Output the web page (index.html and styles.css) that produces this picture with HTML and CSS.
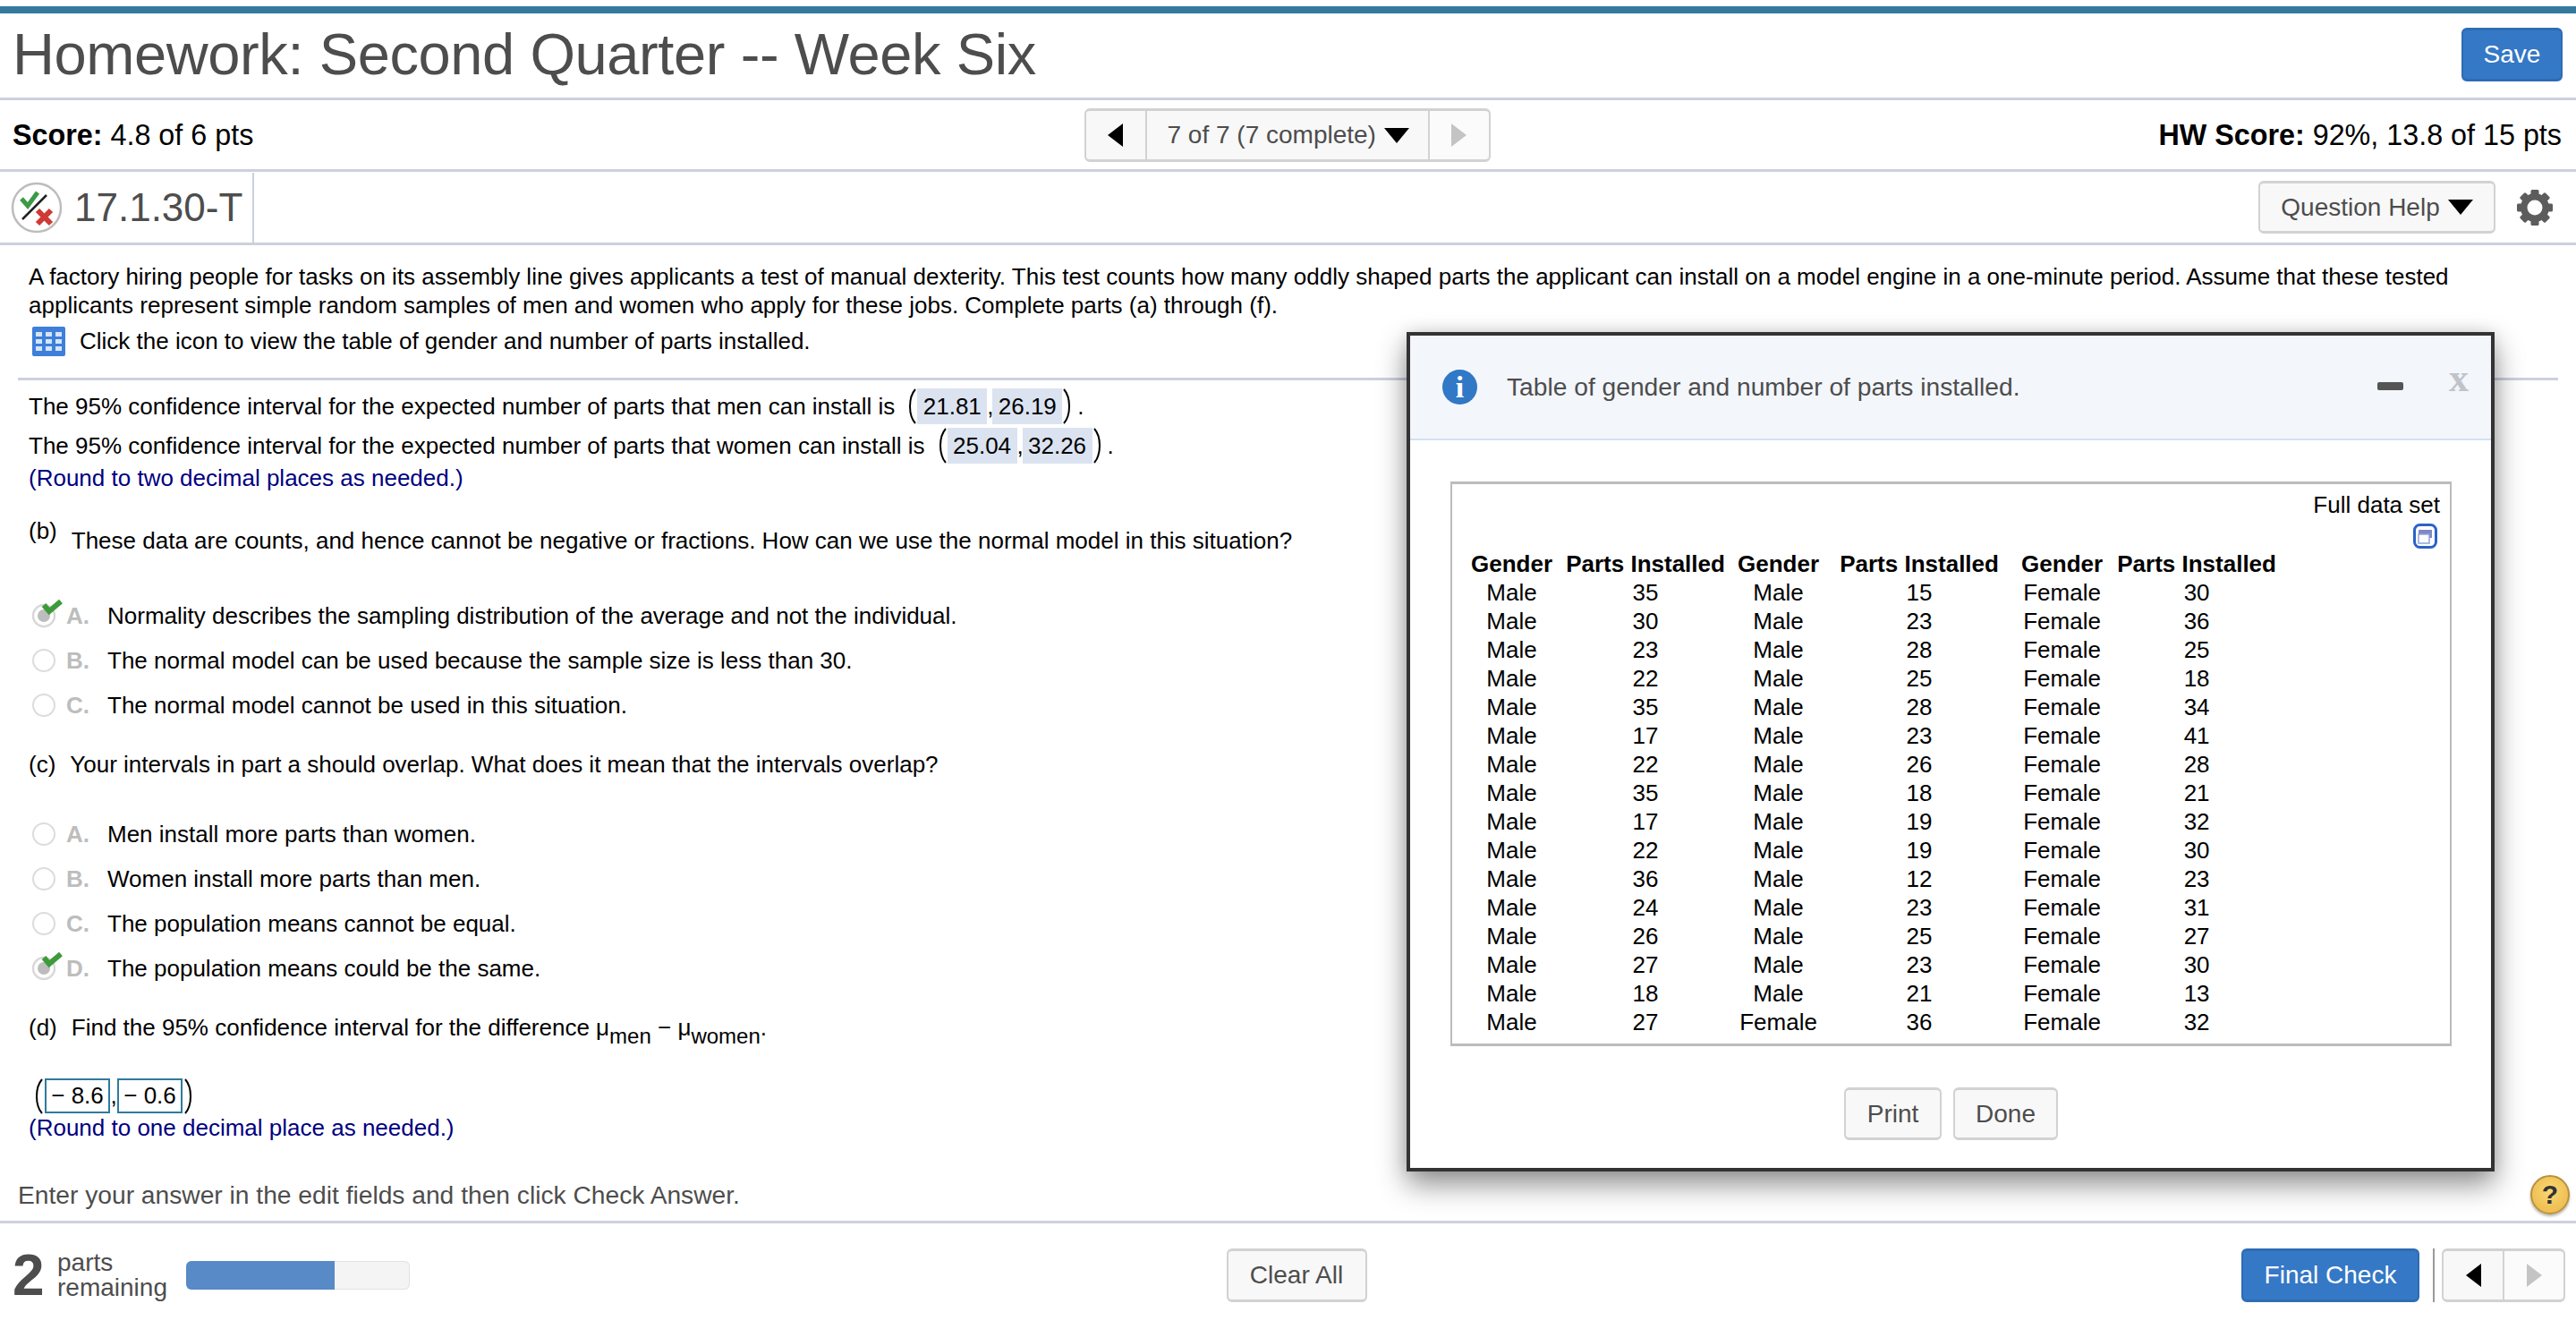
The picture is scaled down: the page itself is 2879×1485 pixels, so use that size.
FILE: index.html
```html
<!DOCTYPE html>
<html lang="en">

<head>
    <meta charset="UTF-8">
    <title>Homework: Second Quarter -- Week Six</title>
    <link rel="stylesheet" href="styles.css">
</head>

<body>
    <svg class="defs" width="0" height="0">
        <symbol id="radio-checked" viewBox="0 0 40 36">
            <circle cx="16" cy="21" r="12" fill="none" stroke="#d8d8d8" stroke-width="2.5"/>
            <circle cx="16" cy="21" r="7" fill="#bdbdbd"/>
            <path d="M16 9l6 7L35 5" fill="none" stroke="#3f9a3c" stroke-width="6"/>
        </symbol>
        <symbol id="paren-left" viewBox="0 0 10 40">
            <path d="M9 1C1 10 1 30 9 39" fill="none" stroke="#000" stroke-width="2"/>
        </symbol>
        <symbol id="paren-right" viewBox="0 0 10 40">
            <path d="M1 1C9 10 9 30 1 39" fill="none" stroke="#000" stroke-width="2"/>
        </symbol>
    </svg>

    <header class="title-row">
        <h1>Homework: Second Quarter -- Week Six</h1>
        <button class="btn btn-primary btn-save">Save</button>
    </header>

    <div class="score-row">
        <div><b>Score:</b> 4.8 of 6 pts</div>
        <div class="nav-group">
            <span class="nav-arrow"><i class="tri-left"></i></span>
            <span class="nav-mid">7 of 7 (7 complete)<i class="tri-down"></i></span>
            <span class="nav-arrow nav-off"><i class="tri-right"></i></span>
        </div>
        <div class="hw-score"><b>HW Score:</b> 92%, 13.8 of 15 pts</div>
    </div>

    <div class="question-row">
        <div class="question-id">
            <svg class="verdict" viewBox="0 0 58 58">
                <circle cx="29" cy="29" r="27" fill="#fff" stroke="#bdbdbd" stroke-width="2.5"/>
                <path d="M12 19l7 8L30 12" fill="none" stroke="#3c9a46" stroke-width="5"/>
                <path d="M13 42L40 15" stroke="#222" stroke-width="2.5"/>
                <path d="M30 32l15 15M45 32L30 47" stroke="#cf3a34" stroke-width="6"/>
            </svg>
            <span>17.1.30-T</span>
        </div>
        <div class="question-tools">
            <button class="btn btn-help">Question Help<i class="tri-down"></i></button>
            <svg class="gear" viewBox="0 0 40 40">
                <g fill="#5c5c5c">
                    <rect x="15.5" y="0" width="9" height="40" rx="1.5"/>
                    <rect x="15.5" y="0" width="9" height="40" rx="1.5" transform="rotate(45 20 20)"/>
                    <rect x="15.5" y="0" width="9" height="40" rx="1.5" transform="rotate(90 20 20)"/>
                    <rect x="15.5" y="0" width="9" height="40" rx="1.5" transform="rotate(135 20 20)"/>
                    <circle cx="20" cy="20" r="16"/>
                </g>
                <circle cx="20" cy="20" r="8.5" fill="#fff"/>
            </svg>
        </div>
    </div>

    <main class="content">
        <p class="intro">A factory hiring people for tasks on its assembly line gives applicants a test of manual dexterity. This test counts how many oddly shaped parts the applicant can install on a model engine in a one-minute period. Assume that these tested applicants represent simple random samples of men and women who apply for these jobs. Complete parts (a) through (f).</p>
        <div class="table-link">
            <svg class="grid-icon" viewBox="0 0 37 33">
                <rect width="37" height="33" rx="2" fill="#3d7fd9"/>
                <g fill="#d5e4f8">
                    <rect x="4" y="6" width="7" height="5"/><rect x="15" y="6" width="7" height="5"/><rect x="26" y="6" width="7" height="5"/>
                    <rect x="4" y="14" width="7" height="5"/><rect x="15" y="14" width="7" height="5"/><rect x="26" y="14" width="7" height="5"/>
                    <rect x="4" y="22" width="7" height="5"/><rect x="15" y="22" width="7" height="5"/><rect x="26" y="22" width="7" height="5"/>
                </g>
            </svg>
            <span>Click the icon to view the table of gender and number of parts installed.</span>
        </div>
        <hr class="rule">

        <div class="interval"><span>The 95% confidence interval for the expected number of parts that men can install is</span>
            <svg class="paren"><use href="#paren-left"/></svg><span class="filled">21.81</span><span class="comma">,</span><span class="filled">26.19</span><svg class="paren paren-r"><use href="#paren-right"/></svg><span>.</span></div>
        <div class="interval"><span>The 95% confidence interval for the expected number of parts that women can install is</span>
            <svg class="paren"><use href="#paren-left"/></svg><span class="filled">25.04</span><span class="comma">,</span><span class="filled">32.26</span><svg class="paren paren-r"><use href="#paren-right"/></svg><span>.</span></div>
        <div class="note">(Round to two decimal places as needed.)</div>

        <div class="part part-b"><span class="part-label">(b)</span><span>These data are counts, and hence cannot be negative or fractions. How can we use the normal model in this situation?</span></div>
        <div class="options options-b">
            <div class="option"><svg class="radio-check"><use href="#radio-checked"/></svg><b>A.</b><span>Normality describes the sampling distribution of the average and not the individual.</span></div>
            <div class="option"><i class="radio"></i><b>B.</b><span>The normal model can be used because the sample size is less than 30.</span></div>
            <div class="option"><i class="radio"></i><b>C.</b><span>The normal model cannot be used in this situation.</span></div>
        </div>

        <div class="part part-c"><span class="part-label">(c)</span><span>Your intervals in part a should overlap. What does it mean that the intervals overlap?</span></div>
        <div class="options options-c">
            <div class="option"><i class="radio"></i><b>A.</b><span>Men install more parts than women.</span></div>
            <div class="option"><i class="radio"></i><b>B.</b><span>Women install more parts than men.</span></div>
            <div class="option"><i class="radio"></i><b>C.</b><span>The population means cannot be equal.</span></div>
            <div class="option"><svg class="radio-check"><use href="#radio-checked"/></svg><b>D.</b><span>The population means could be the same.</span></div>
        </div>

        <div class="part part-d"><span class="part-label">(d)</span><span>Find the 95% confidence interval for the difference <span class="math">μ<sub>men</sub> − μ<sub>women</sub>.</span></span></div>
        <div class="answer">
            <svg class="paren"><use href="#paren-left"/></svg><span class="answer-box">− 8.6</span><span class="comma">,</span><span class="answer-box">− 0.6</span><svg class="paren paren-r"><use href="#paren-right"/></svg>
        </div>
        <div class="note note-d">(Round to one decimal place as needed.)</div>
        <div class="enter">Enter your answer in the edit fields and then click Check Answer.</div>
    </main>

    <footer class="footer">
        <div class="parts-left">
            <span class="parts-num">2</span>
            <span class="parts-text">parts<br>remaining</span>
            <div class="progress"><div class="progress-fill"></div></div>
        </div>
        <button class="btn btn-clear">Clear All</button>
        <div class="footer-right">
            <button class="btn btn-primary btn-final">Final Check</button>
            <span class="footer-sep"></span>
            <div class="nav-group nav-small">
                <span class="nav-arrow"><i class="tri-left"></i></span>
                <span class="nav-arrow nav-off"><i class="tri-right"></i></span>
            </div>
        </div>
    </footer>

    <div class="help-bubble">?</div>

    <section class="modal">
        <div class="modal-head">
            <span class="info-icon">i</span>
            <span class="modal-title">Table of gender and number of parts installed.</span>
            <i class="modal-min"></i>
            <span class="modal-close">x</span>
        </div>
        <div class="modal-body">
            <div class="data-box">
                <div class="full-data">Full data set</div>
                <div class="full-icon-row">
                    <svg class="full-icon" viewBox="0 0 27 28">
                        <rect x="1.5" y="1.5" width="24" height="25" rx="6" fill="#fff" stroke="#2a62c9" stroke-width="3"/>
                        <rect x="6" y="7" width="15" height="9" fill="#7f88c4"/>
                        <rect x="6" y="12" width="12" height="10" fill="#fff" stroke="#8fa4d8" stroke-width="1.5"/>
                    </svg>
                </div>
                <table class="data-table">
                    <thead>
                        <tr><th>Gender</th><th>Parts Installed</th><th>Gender</th><th>Parts Installed</th><th>Gender</th><th>Parts Installed</th></tr>
                    </thead>
                    <tbody>
                        <tr><td>Male</td><td>35</td><td>Male</td><td>15</td><td>Female</td><td>30</td></tr>
                        <tr><td>Male</td><td>30</td><td>Male</td><td>23</td><td>Female</td><td>36</td></tr>
                        <tr><td>Male</td><td>23</td><td>Male</td><td>28</td><td>Female</td><td>25</td></tr>
                        <tr><td>Male</td><td>22</td><td>Male</td><td>25</td><td>Female</td><td>18</td></tr>
                        <tr><td>Male</td><td>35</td><td>Male</td><td>28</td><td>Female</td><td>34</td></tr>
                        <tr><td>Male</td><td>17</td><td>Male</td><td>23</td><td>Female</td><td>41</td></tr>
                        <tr><td>Male</td><td>22</td><td>Male</td><td>26</td><td>Female</td><td>28</td></tr>
                        <tr><td>Male</td><td>35</td><td>Male</td><td>18</td><td>Female</td><td>21</td></tr>
                        <tr><td>Male</td><td>17</td><td>Male</td><td>19</td><td>Female</td><td>32</td></tr>
                        <tr><td>Male</td><td>22</td><td>Male</td><td>19</td><td>Female</td><td>30</td></tr>
                        <tr><td>Male</td><td>36</td><td>Male</td><td>12</td><td>Female</td><td>23</td></tr>
                        <tr><td>Male</td><td>24</td><td>Male</td><td>23</td><td>Female</td><td>31</td></tr>
                        <tr><td>Male</td><td>26</td><td>Male</td><td>25</td><td>Female</td><td>27</td></tr>
                        <tr><td>Male</td><td>27</td><td>Male</td><td>23</td><td>Female</td><td>30</td></tr>
                        <tr><td>Male</td><td>18</td><td>Male</td><td>21</td><td>Female</td><td>13</td></tr>
                        <tr><td>Male</td><td>27</td><td>Female</td><td>36</td><td>Female</td><td>32</td></tr>
                    </tbody>
                </table>
            </div>
            <div class="modal-actions">
                <button class="btn btn-print">Print</button>
                <button class="btn btn-done">Done</button>
            </div>
        </div>
    </section>
</body>

</html>
```

FILE: styles.css
```css
html,
body {
    margin: 0;
    padding: 0;
}

body {
    position: relative;
    display: flex;
    flex-direction: column;
    height: 1485px;
    overflow: hidden;
    background: #fff;
    color: #000;
    font-family: "Liberation Sans", Arial, sans-serif;
    font-size: 26px;
    border-top: 7px solid #fff;
    box-sizing: border-box;
}

.defs {
    position: absolute;
}

.btn {
    box-sizing: border-box;
    background: #f8f8f8;
    border: 2px solid #d2d2d2;
    border-top-width: 3px;
    border-bottom-width: 3px;
    border-radius: 6px;
    color: #4d4d4d;
    font-family: inherit;
    font-size: 28px;
    padding: 0;
}

.btn-primary {
    background: #3578c6;
    border-color: #2f6cb4;
    color: #fff;
}

.title-row {
    display: flex;
    justify-content: space-between;
    align-items: center;
    box-sizing: border-box;
    height: 105px;
    padding: 0 15px 3px 14px;
    border-top: 8px solid #347a9e;
    border-bottom: 3px solid #ccd0df;
}

h1 {
    margin: 0;
    color: #4d4d4d;
    font-size: 65px;
    font-weight: normal;
    letter-spacing: -0.4px;
}

.btn-save {
    width: 113px;
    height: 60px;
}

.score-row {
    display: grid;
    grid-template-columns: 1fr auto 1fr;
    align-items: center;
    box-sizing: border-box;
    height: 80px;
    padding: 1px 16px 0 14px;
    border-bottom: 3px solid #ccd0df;
    font-size: 32.3px;
}

.hw-score {
    text-align: right;
}

.nav-group {
    display: flex;
    box-sizing: border-box;
    height: 60px;
    background: #f8f8f8;
    border: 2px solid #d2d2d2;
    border-top-width: 3px;
    border-bottom-width: 3px;
    border-radius: 6px;
    color: #4d4d4d;
    font-size: 28px;
}

.nav-arrow {
    display: flex;
    justify-content: center;
    align-items: center;
    width: 66px;
}

.nav-mid {
    display: flex;
    align-items: center;
    box-sizing: border-box;
    width: 318px;
    padding-left: 23px;
    border-left: 2px solid #d2d2d2;
    border-right: 2px solid #d2d2d2;
}

.nav-off {
    background: #fbfbfb;
    border-radius: 0 6px 6px 0;
}

.tri-left {
    border-top: 13px solid transparent;
    border-bottom: 13px solid transparent;
    border-right: 17px solid #000;
}

.tri-right {
    border-top: 13px solid transparent;
    border-bottom: 13px solid transparent;
    border-left: 17px solid #c4c4c4;
}

.tri-down {
    display: inline-block;
    margin-left: 9px;
    border-left: 14px solid transparent;
    border-right: 14px solid transparent;
    border-top: 17px solid #000;
}

.question-row {
    display: flex;
    justify-content: space-between;
    align-items: center;
    box-sizing: border-box;
    height: 82px;
    border-bottom: 3px solid #ccd0df;
}

.question-id {
    display: flex;
    align-items: center;
    box-sizing: border-box;
    width: 284px;
    height: 78px;
    padding-left: 12px;
    border-right: 2px solid #ccd0df;
    color: #4d4d4d;
    font-size: 44px;
}

.verdict {
    width: 58px;
    height: 58px;
    margin-right: 13px;
}

.question-tools {
    display: flex;
    align-items: center;
    gap: 24px;
    padding-right: 26px;
}

.btn-help {
    display: flex;
    align-items: center;
    justify-content: center;
    width: 265px;
    height: 59px;
}

.gear {
    width: 40px;
    height: 40px;
}

.content {
    flex: 1;
    min-height: 0;
}

.intro {
    margin: 19px 70px 0 32px;
    line-height: 32px;
}

.table-link {
    display: flex;
    align-items: center;
    height: 40px;
    margin: 4px 0 0 36px;
}

.grid-icon {
    width: 37px;
    height: 33px;
    margin-right: 16px;
}

.rule {
    height: 3px;
    margin: 21px 20px 7px;
    border: 0;
    background: #ccd0df;
}

.interval {
    display: flex;
    align-items: center;
    height: 44px;
    padding-left: 32px;
    white-space: nowrap;
}

.paren {
    flex: none;
    width: 10px;
    height: 40px;
    margin: 0 1px 0 14px;
}

.paren-r {
    margin: 0 6px 0 1px;
}

.filled {
    box-sizing: border-box;
    width: 78px;
    height: 40px;
    background: #dbe3f0;
    line-height: 40px;
    text-align: center;
}

.comma {
    width: 6px;
    text-align: center;
}

.note {
    padding-left: 32px;
    color: #00007f;
    line-height: 28px;
}

.part {
    display: flex;
    align-items: center;
    height: 32px;
    padding-left: 32px;
}

.part-label {
    margin-right: 16px;
}

.part-b {
    margin-top: 40px;
}

.part-b .part-label {
    position: relative;
    top: -11px;
}

.part-c,
.part-d {
    margin-top: 25px;
}

.math sub {
    position: relative;
    top: 3px;
    font-size: 24px;
    line-height: 0;
}

.options-b {
    margin-top: 43px;
}

.options-c {
    margin-top: 37px;
}

.option {
    display: flex;
    align-items: center;
    height: 50px;
    padding-left: 36px;
}

.option b {
    width: 46px;
    color: #bdbdbd;
}

.radio {
    box-sizing: border-box;
    width: 26px;
    height: 26px;
    margin-right: 12px;
    border: 2.5px solid #dcdcdc;
    border-radius: 50%;
}

.radio-check {
    width: 40px;
    height: 36px;
    margin: -6px 1px 0 -3px;
}

.answer {
    display: flex;
    align-items: center;
    height: 39px;
    margin-top: 41px;
    padding-left: 38px;
}

.answer .paren {
    margin: 0 2px 0 0;
}

.answer .paren-r {
    margin: 0 0 0 2px;
}

.answer .comma {
    width: 8px;
}

.answer-box {
    box-sizing: border-box;
    width: 73px;
    height: 39px;
    border: 2px solid #2f7a9e;
    line-height: 35px;
    text-align: center;
}

.note-d {
    margin-top: 2px;
}

.enter {
    margin-top: 45px;
    padding-left: 20px;
    color: #4d4d4d;
    line-height: 32px;
    font-size: 28.2px;
}

.footer {
    display: grid;
    grid-template-columns: 1fr auto 1fr;
    align-items: center;
    box-sizing: border-box;
    height: 121px;
    padding: 0 12px 2px 14px;
    border-top: 3px solid #ccd0df;
}

.parts-left {
    display: flex;
    align-items: center;
}

.parts-num {
    width: 50px;
    color: #4d4d4d;
    font-size: 64px;
    font-weight: bold;
    line-height: 64px;
}

.parts-text {
    width: 144px;
    color: #4d4d4d;
    font-size: 28px;
    line-height: 28px;
}

.progress {
    width: 250px;
    height: 32px;
    overflow: hidden;
    background: #f4f4f4;
    border-radius: 6px;
    box-shadow: inset 0 0 0 1px #e2e2e2;
}

.progress-fill {
    width: 166px;
    height: 32px;
    background: #578ac6;
}

.btn-clear {
    width: 157px;
    height: 60px;
    margin-left: 17px;
}

.footer-right {
    display: flex;
    justify-content: flex-end;
    align-items: center;
}

.btn-final {
    width: 199px;
    height: 60px;
}

.footer-sep {
    width: 2px;
    height: 60px;
    margin: 0 8px 0 15px;
    background: #9a9a9a;
}

.nav-small .nav-arrow {
    width: 66px;
}

.nav-small .nav-off {
    border-left: 2px solid #d2d2d2;
}

.help-bubble {
    position: absolute;
    left: 2828px;
    top: 1306px;
    box-sizing: border-box;
    width: 44px;
    height: 44px;
    background: radial-gradient(circle at 50% 40%, #fbd775, #e9b545);
    border: 2px solid #b9913c;
    border-radius: 50%;
    box-shadow: 0 2px 3px rgba(0, 0, 0, 0.3);
    color: #333;
    font-size: 30px;
    font-weight: bold;
    line-height: 40px;
    text-align: center;
}

.modal {
    position: absolute;
    left: 1572px;
    top: 364px;
    box-sizing: border-box;
    width: 1216px;
    height: 938px;
    background: #fff;
    border: 4px solid #333;
    box-shadow: 0 14px 30px rgba(0, 0, 0, 0.45), 0 -2px 14px rgba(0, 0, 0, 0.08);
}

.modal-head {
    display: flex;
    align-items: center;
    box-sizing: border-box;
    height: 117px;
    padding-left: 36px;
    background: #f3f6fb;
    border-bottom: 2px solid #cfe2f7;
}

.info-icon {
    width: 39px;
    height: 39px;
    margin-right: 33px;
    background: #3178c6;
    border-radius: 50%;
    color: #fff;
    font-family: "Liberation Serif", serif;
    font-size: 34px;
    font-weight: bold;
    line-height: 39px;
    text-align: center;
}

.modal-title {
    flex: 1;
    color: #4d4d4d;
    font-size: 28.2px;
}

.modal-min {
    width: 29px;
    height: 9px;
    margin: -2px 51px 0 0;
    background: #555;
    border-radius: 2px;
}

.modal-close {
    margin: -20px 25px 0 0;
    color: #bfc4c9;
    font-family: "Liberation Serif", serif;
    font-size: 44px;
    font-weight: bold;
    line-height: 30px;
}

.modal-body {
    padding: 46px 44px 0 45px;
}

.data-box {
    box-sizing: border-box;
    height: 631px;
    padding: 8px 11px 0 21px;
    border: 2px solid #bcbcbc;
    border-top-width: 3px;
    border-bottom-width: 3px;
}

.full-data {
    line-height: 30px;
    text-align: right;
}

.full-icon-row {
    display: flex;
    justify-content: flex-end;
    height: 35px;
    padding: 6px 3px 0 0;
    box-sizing: border-box;
}

.full-icon {
    width: 27px;
    height: 28px;
}

.data-table {
    border-collapse: collapse;
    table-layout: fixed;
}

.data-table th,
.data-table td {
    height: 32px;
    padding: 0;
    line-height: 32px;
    text-align: center;
    white-space: nowrap;
}

.data-table th:nth-child(1),
.data-table td:nth-child(1) {
    width: 90px;
    padding-right: 15px;
}

.data-table th:nth-child(2),
.data-table td:nth-child(2) {
    width: 178px;
    padding-right: 14px;
}

.data-table th:nth-child(3),
.data-table td:nth-child(3) {
    width: 90px;
    padding-right: 23px;
}

.data-table th:nth-child(4),
.data-table td:nth-child(4) {
    width: 178px;
    padding-right: 25px;
}

.data-table th:nth-child(5),
.data-table td:nth-child(5) {
    width: 90px;
    padding-right: 16px;
}

.data-table th:nth-child(6),
.data-table td:nth-child(6) {
    width: 178px;
}

.modal-actions {
    display: flex;
    justify-content: center;
    gap: 13px;
    margin-top: 46px;
}

.btn-print {
    width: 109px;
    height: 59px;
}

.btn-done {
    width: 117px;
    height: 59px;
}
```
